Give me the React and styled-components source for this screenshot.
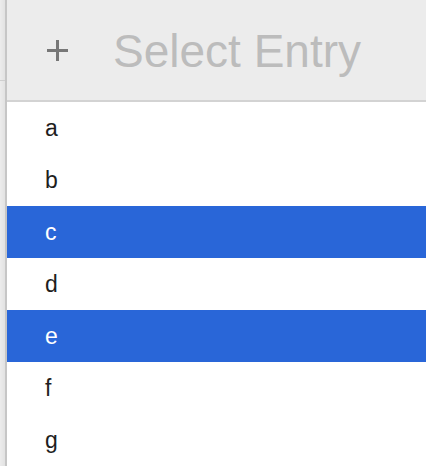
import React from "react";
import styled, { createGlobalStyle } from "styled-components";

const Global = createGlobalStyle`
  html, body { margin: 0; padding: 0; background: #ffffff; overflow: hidden; }
  body { font-family: "Liberation Sans", Arial, sans-serif; }
`;

const Frame = styled.div`
  display: flex;
  width: 426px;
  height: 466px;
`;

const Gutter = styled.div`
  width: 5px;
  flex: none;
  display: flex;
  flex-direction: column;
  background: linear-gradient(to right, #ececec, #e2e2e2);
  border-right: 2px solid #c6c6c6;
`;

const GutterTop = styled.div`
  height: 80px;
  border-bottom: 1px solid #cfcfcf;
`;

const Panel = styled.div`
  flex: 1;
  display: flex;
  flex-direction: column;
  min-width: 0;
`;

const Header = styled.div`
  height: 100px;
  flex: none;
  display: flex;
  align-items: center;
  background: #ececec;
  border-bottom: 2px solid #d3d3d3;
  box-sizing: content-box;
`;

const AddButton = styled.div`
  width: 21px;
  height: 21px;
  margin-left: 40px;
  margin-right: 45px;
  position: relative;
  &::before, &::after {
    content: "";
    position: absolute;
    background: #777777;
  }
  &::before { left: 0; right: 0; top: 9px; height: 3px; }
  &::after { top: 0; bottom: 0; left: 9px; width: 3px; }
`;

const Placeholder = styled.div`
  font-size: 46px;
  color: #bcbcbc;
  line-height: 1;
  margin-top: 2px;
`;

const List = styled.div`
  display: flex;
  flex-direction: column;
`;

const Row = styled.div`
  height: 52px;
  display: flex;
  align-items: center;
  padding-left: 38px;
  font-size: 23px;
  background: ${(p) => (p.$selected ? "#2966d8" : "#ffffff")};
  color: ${(p) => (p.$selected ? "#ffffff" : "#1e1e1e")};
`;

const items = [
  { label: "a" },
  { label: "b" },
  { label: "c", selected: true },
  { label: "d" },
  { label: "e", selected: true },
  { label: "f" },
  { label: "g" },
];

export default function App() {
  return (
    <>
      <Global />
      <Frame>
        <Gutter>
          <GutterTop />
        </Gutter>
        <Panel>
          <Header>
            <AddButton />
            <Placeholder>Select Entry</Placeholder>
          </Header>
          <List>
            {items.map((it) => (
              <Row key={it.label} $selected={it.selected}>
                {it.label}
              </Row>
            ))}
          </List>
        </Panel>
      </Frame>
    </>
  );
}
